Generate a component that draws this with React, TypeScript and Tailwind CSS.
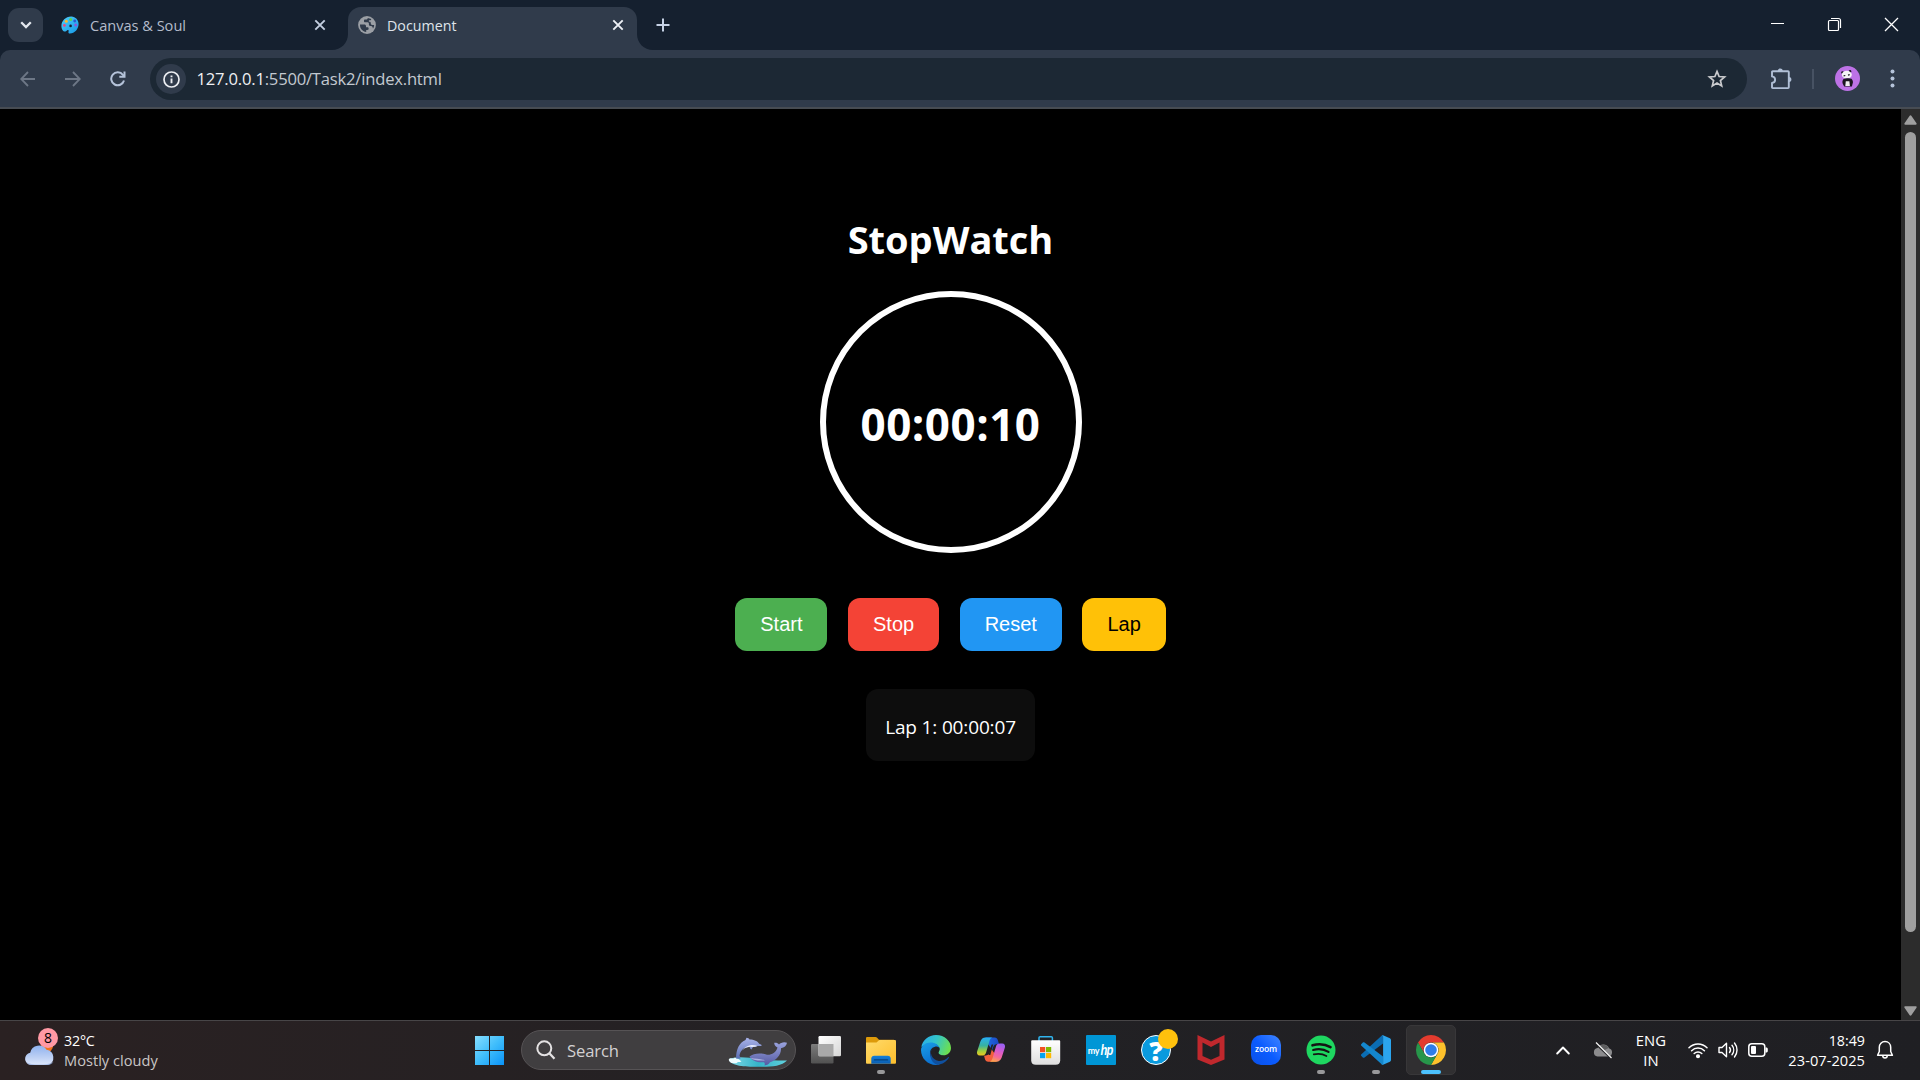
import React from 'react'
import type { ReactNode } from 'react'

/* ---------- browser chrome icons ---------- */

const PaletteIcon = () => (
  <svg width="18" height="18" viewBox="0 0 18 18">
    <defs>
      <linearGradient id="pal" x1="0" y1="0" x2="1" y2="1">
        <stop offset="0" stopColor="#4fd0fb" />
        <stop offset="1" stopColor="#1597e6" />
      </linearGradient>
    </defs>
    <path
      d="M10.400 .4C14.600 .6 17.600 3.800 17.600 7.900c0 5-4 9.500-8.700 9.600-1.300 0-1.700-.9-1.400-1.800.4-1.100.1-1.700-.7-1.700-.9 0-1.300 1.200-2.500 1.500C2.400 15.900.4 13.200.4 9.900.4 4.600 4.900.2 10.400.4z"
      fill="url(#pal)"
    />
    <circle cx="9.600" cy="9.900" r="1.300" fill="#14202f" />
    <circle cx="3.400" cy="9.400" r="1.400" fill="#f0477d" />
    <circle cx="5.300" cy="5.300" r="1.500" fill="#ffb62e" />
    <circle cx="9.600" cy="3.500" r="1.500" fill="#62cf4a" />
    <circle cx="13.700" cy="5" r="1.400" fill="#2c56d0" />
    <circle cx="14.700" cy="8.900" r="1.500" fill="#8b57dd" />
  </svg>
)

const GlobeIcon = () => (
  <svg width="18" height="18" viewBox="0 0 18 18">
    <circle cx="9" cy="9" r="8.900" fill="#9b9fa5" />
    <path
      d="M2 8.600h4.200c1.200 0 1.800.6 1.800 1.600v1h1.400c.8 0 1.200.4 1.200 1.100v.4c0 .8-.5 1.200-1.300 1.200H8.200v2C4.800 15.500 2 12.900 2 9z"
      fill="#303b4b"
    />
    <path
      d="M9.800 2.100C9.600 3.200 9 3.600 8 3.600H7c-.6 0-1 .4-1 1v.7c0 .6.400 1 1 1h2.400c1 0 1.500.6 1.500 1.400v.9c0 .8.5 1.300 1.300 1.300h.7c.8 0 1.300.4 1.600 1.200l.5 1.300c.8-1 1.200-2.200 1.100-3.500h-1.900c-.9 0-1.400-.5-1.400-1.300V7c0-.8-.5-1.300-1.300-1.300h-.6V4.200h1c.9 0 1.300-.5 1.300-1.300z"
      fill="#303b4b"
    />
  </svg>
)

const CloseX = ({ color }: { color: string }) => (
  <svg width="12" height="12" viewBox="0 0 12 12" fill="none" stroke={color} strokeWidth="1.900">
    <path d="M1.300 1.300l9.400 9.400M10.700 1.300L1.300 10.700" />
  </svg>
)

const TabFlareLeft = () => (
  <svg className="absolute -left-4 bottom-0" width="16" height="16" viewBox="0 0 16 16">
    <path d="M16 0v16H0C9 16 16 9 16 0z" fill="#303b4b" />
  </svg>
)
const TabFlareRight = () => (
  <svg className="absolute -right-4 bottom-0" width="16" height="16" viewBox="0 0 16 16">
    <path d="M0 0v16h16C7 16 0 9 0 0z" fill="#303b4b" />
  </svg>
)

const ExtensionsIcon = () => (
  <svg width="24" height="24" viewBox="0 0 24 24" fill="none" stroke="#b0bfd6" strokeWidth="1.900" strokeLinejoin="round">
    <path d="M3.800 4.200H19c.5 0 .8.300.8.800V20.300c0 .5-.3.800-.8.800H3.800c-.5 0-.8-.3-.8-.8v-4.400c1.900-.2 3.100-1.400 3.100-3.200S4.900 9.600 3 9.400V5c0-.5.3-.8.800-.8z" />
    <path d="M8.800 4c.2-1.700 1.200-2.400 2.500-2.400S13.600 2.300 13.800 4zM20 10c1.700.2 2.400 1.200 2.400 2.500s-.7 2.300-2.400 2.500z" fill="#b0bfd6" stroke="none" />
  </svg>
)

const PandaAvatar = () => (
  <svg width="25" height="25" viewBox="0 0 25 25">
    <circle cx="12.500" cy="12.500" r="12.500" fill="#bd72e6" />
    <circle cx="7.500" cy="6.500" r="1.300" fill="#1b1520" />
    <circle cx="15" cy="5.400" r="1.300" fill="#1b1520" />
    <ellipse cx="11.800" cy="8.700" rx="5" ry="3.900" fill="#f5f3f5" />
    <path d="M8.600 9.800l1.700-.3M13 9.100l1.700-.4" stroke="#1b1520" strokeWidth="1.200" />
    <path d="M8.500 13c2-.9 6-1.200 8-.3 1.500 1.600 1.900 3.700 1 5.300l-.6 2.400H9.200L8 18.300c-1-1.800-.7-3.800.5-5.300z" fill="#1b1520" />
    <path d="M10.800 15.200h3.600l.5 4.700h-4.600z" fill="#efecee" />
  </svg>
)

/* ---------- taskbar icons ---------- */

const WeatherIcon = () => (
  <svg width="32" height="26" viewBox="0 0 32 26">
    <defs>
      <linearGradient id="cl" x1="0" y1="0" x2="0" y2="1">
        <stop offset="0" stopColor="#8fb2ee" />
        <stop offset="0.600" stopColor="#bdd0f4" />
        <stop offset="1" stopColor="#dde7fb" />
      </linearGradient>
    </defs>
    <circle cx="23" cy="6" r="6" fill="#f0731c" />
    <path d="M7 25a6.200 6.200 0 0 1-.8-12.300A9 9 0 0 1 22.500 9.700 7.900 7.900 0 0 1 24 25z" fill="url(#cl)" />
    <path d="M2.500 22c3 3.600 24 3.500 27.200-.5-1.200 2.300-3.300 3.500-5.700 3.500H7c-1.800 0-3.500-1.200-4.500-3z" fill="#8fa9de" opacity=".7" />
  </svg>
)

const WindowsIcon = () => (
  <svg width="30" height="30" viewBox="0 0 30 30">
    <defs>
      <linearGradient id="win" x1="0" y1="0" x2="1" y2="1">
        <stop offset="0" stopColor="#86deff" />
        <stop offset="0.500" stopColor="#3fbdfb" />
        <stop offset="1" stopColor="#0a93f8" />
      </linearGradient>
    </defs>
    <path d="M0 1h14v14H0zM15 1h14v14H15zM0 16h14v14H0zM15 16h14v14H15z" fill="url(#win)" />
  </svg>
)

const DolphinArt = () => (
  <svg width="60" height="30" viewBox="0 0 60 30">
    <defs>
      <linearGradient id="sea" x1="0" y1="0" x2="1" y2="0">
        <stop offset="0" stopColor="#7fd9e6" />
        <stop offset="0.500" stopColor="#35b4c9" />
        <stop offset="1" stopColor="#5fd0dc" />
      </linearGradient>
      <linearGradient id="dol" x1="0" y1="0" x2="0" y2="1">
        <stop offset="0" stopColor="#a9b3ea" />
        <stop offset="1" stopColor="#5b6fb4" />
      </linearGradient>
      <linearGradient id="wha" x1="0" y1="0" x2="0" y2="1">
        <stop offset="0" stopColor="#9aa3dd" />
        <stop offset="1" stopColor="#555aa3" />
      </linearGradient>
    </defs>
    <path d="M1 22c5-2.500 14-2 21-1.300 10 1.600 26 3.300 37 2.800-6 6.500-18 6.500-32 6.300C14 29.700 2 28.500 1 22z" fill="url(#sea)" />
    <path d="M1 22c2-1.800 3.500.2 5-.8s2.500.5 4 .7 2 1.600 3.500 2.600c-2 1.200-3 0-4.500 1.200S6 25.500 4.500 26 0 23.500 1 22z" fill="#effcff" />
    <path
      d="M8 21.500c.3-9.500 3-15.500 9.500-18.500L18.500.8c1.500.2 2.500.9 3 1.600 4.500 0 8.300 1.800 9.700 4.400 1.300.5 2.600 1 2.600 1.700-1 .8-2.800.6-4.300.4-2 .8-3 1-4.500 1l-1.500 2.600c-1-.4-1.700-1.300-1.800-2.500C15.500 9.800 12 14 11.500 19c1 .8 1 1.800.8 2.700z"
      fill="url(#dol)"
    />
    <path d="M29.500 9c-4.500-2-11.500-1-15 4.500 3-3.200 6-3.800 9-3.600 2.500.1 4.500-.2 6-.9z" fill="#e4e8fb" />
    <path
      d="M21.500 19.500c4-3.500 12-3.800 17.500-1.800 4.500.3 9-1.700 10.500-7.200-2-.7-3.500-2.700-3.200-4.700 2-.3 3.700.3 4.700 1.600 1.500-1.700 5-3 8-1.700-.5 3-2.700 5-6 5.500.3 7-5 12.300-11 14-1 1.700-3 3-5.500 3.200.5-1.500.3-2.500-.5-3.200-7 .5-12.500-1.500-14.500-5.700z"
      fill="url(#wha)"
    />
    <path d="M22.500 21c5 1 10 .7 14.500 2.200-4 .8-11 .5-14.500-2.200z" fill="#c9d0f5" opacity=".7" />
  </svg>
)

const TaskViewIcon = () => (
  <svg width="30" height="30" viewBox="0 0 30 30">
    <defs>
      <linearGradient id="tv" x1="0" y1="0" x2="1" y2="1">
        <stop offset="0" stopColor="#ffffff" />
        <stop offset="1" stopColor="#d6d6d6" />
      </linearGradient>
      <linearGradient id="tv2" x1="0" y1="0" x2="0" y2="1">
        <stop offset="0" stopColor="#7c7c7c" />
        <stop offset="1" stopColor="#515151" />
      </linearGradient>
    </defs>
    <rect x="0" y="9" width="22.500" height="19.500" rx="1.200" fill="url(#tv2)" />
    <rect x="7.500" y="1" width="22.500" height="20.300" rx="1.200" fill="url(#tv)" />
    <path d="M7.500 9h15v12.300h-14a1 1 0 0 1-1-1z" fill="#a9a9a9" />
  </svg>
)

const ExplorerIcon = () => (
  <svg width="30" height="30" viewBox="0 0 30 30">
    <defs>
      <linearGradient id="fo" x1="0" y1="0" x2="1" y2="1">
        <stop offset="0" stopColor="#ffdb6b" />
        <stop offset="1" stopColor="#fdbe2c" />
      </linearGradient>
      <linearGradient id="fb" x1="0" y1="0" x2="0" y2="1">
        <stop offset="0" stopColor="#1280da" />
        <stop offset="1" stopColor="#0a5cb0" />
      </linearGradient>
    </defs>
    <path d="M0 3.300C0 2.500.6 2 1.300 2h8.200c.6 0 1 .2 1.400.6L13 4.700H28V14H0z" fill="#dd9a0a" />
    <path d="M0 7.600h9.700c.6 0 1-.2 1.400-.6l1.300-1.300c.4-.4.8-.6 1.400-.6H28.700c.8 0 1.300.5 1.300 1.300v21c0 .8-.5 1.300-1.300 1.300H1.300C.5 28.700 0 28.200 0 27.400z" fill="url(#fo)" />
    <path d="M5.300 28.700V23.600c0-1.700 1.200-2.900 2.900-2.900h13.600c1.700 0 2.900 1.200 2.900 2.900v5.100z" fill="url(#fb)" />
    <path d="M8.500 24.900h13" stroke="#05427f" strokeWidth="1.300" strokeLinecap="round" />
  </svg>
)

const EdgeIcon = () => (
  <svg width="30" height="30" viewBox="0 0 30 30">
    <defs>
      <linearGradient id="e1" x1="0" y1=".3" x2="1" y2=".6">
        <stop offset="0" stopColor="#2aaee8" />
        <stop offset="0.450" stopColor="#33c5c9" />
        <stop offset="1" stopColor="#6fe04a" />
      </linearGradient>
      <linearGradient id="e2" x1="0" y1="0" x2=".4" y2="1">
        <stop offset="0" stopColor="#1a9fe6" />
        <stop offset="1" stopColor="#0b6fd0" />
      </linearGradient>
    </defs>
    <path d="M.3 12C1.500 5 7.600 0 15 0c8.800 0 15 6.200 15 13 0 4.500-3.500 7.300-7.500 7.300-3 0-5.200-1-5.200-2.400 0-1 1.200-1.600 1.200-3.600 0-2.700-2.700-5.800-7.700-5.800C6 8.500 2 11 .3 12z" fill="url(#e1)" />
    <path d="M0 15C0 10.800 4.300 7.400 9.600 7.400c4.600 0 8.300 2.300 9.100 5.900-1.300-1.500-3-2-4.700-1.600-3.800.9-5.700 4.300-4.700 8.300 1 4.200 4.700 7.700 10.200 8.800C17.800 29.700 16.500 30 15 30 6.700 30 0 23.300 0 15z" fill="url(#e2)" />
    <path d="M12 12.600c-4.500 4.600-1.200 12.600 5.700 13.300 4.400.4 7.700-1.600 9.600-3.800.5-.5 1 0 .7.500C25.700 26.600 21.500 29.600 16.500 29.900 9 27.800 7 17.800 12 12.600z" fill="#10509e" />
    <path d="M14.300 15.300c.5-1.800 2-3 4.200-2.600.3 2.600-.9 3.600-1.200 4.700-.2 1.500 1.900 2.700 5.200 2.900-4.800 1.200-9.200-1.200-8.200-5z" fill="#1f2022" />
  </svg>
)

const CopilotIcon = () => (
  <svg width="30" height="30" viewBox="0 0 30 30">
    <defs>
      <linearGradient id="c1" x1="0" y1="0" x2="0" y2="1">
        <stop offset="0" stopColor="#27b0f5" />
        <stop offset="0.450" stopColor="#38b2a0" />
        <stop offset="0.750" stopColor="#a2cf3c" />
        <stop offset="1" stopColor="#f0c620" />
      </linearGradient>
      <linearGradient id="c2" x1=".6" y1="0" x2=".3" y2="1">
        <stop offset="0" stopColor="#9b60f2" />
        <stop offset="0.400" stopColor="#d95bcb" />
        <stop offset="0.700" stopColor="#f5679a" />
        <stop offset="1" stopColor="#fba54b" />
      </linearGradient>
      <linearGradient id="c3" x1="0" y1="0" x2="1" y2="0">
        <stop offset="0" stopColor="#1f6fe8" />
        <stop offset="1" stopColor="#1b49c4" />
      </linearGradient>
    </defs>
    <path d="M9.500 2.500h9.300c1.600 0 2.500 1 3 2.500l1.200 4c-3.500-.3-5 .8-5.800 3l-1 3-5-7z" fill="url(#c3)" />
    <path d="M20.500 26.700h-8.300c-1.800 0-2.700-.8-3.200-2.400L8 20.600c3.500.2 5-.8 5.700-3l1.300-4 5 7z" fill="#f2603c" />
    <path d="M9.500 2.500h6.800c-1.600.4-2.300 1.800-2.900 3.700l-3.300 11.200c-.6 2-1.700 3.200-4.100 3.200H3.800c-2.300 0-3.300-1.700-2.700-4L4.300 6.700C5.200 4 7 2.500 9.500 2.500z" fill="url(#c1)" />
    <path d="M20.500 26.700h-6.800c1.600-.4 2.300-1.800 2.900-3.700l3.300-11.200c.6-2 1.700-3.200 4.100-3.200h2.200c2.300 0 3.300 1.700 2.700 4l-3.200 9.900c-.9 2.700-2.700 4.200-5.200 4.200z" fill="url(#c2)" />
    <path d="M15.600 9.500l1.600.1-2.900 10.500-1.800-.2z" fill="#232225" />
  </svg>
)

const StoreIcon = () => (
  <svg width="30" height="30" viewBox="0 0 30 30">
    <defs>
      <linearGradient id="st" x1="0" y1="0" x2="0" y2="1">
        <stop offset="0" stopColor="#ffffff" />
        <stop offset="1" stopColor="#dedede" />
      </linearGradient>
    </defs>
    <path d="M8 6V2.800c0-.7.400-1.100 1.100-1.100h11.200c.7 0 1.100.4 1.100 1.100V6" fill="none" stroke="#30b4ee" strokeWidth="1.500" />
    <path d="M.2 6.600c0-.9.400-1.300 1.300-1.300h26.400c.9 0 1.300.4 1.300 1.300v18.600c0 3-1.600 4.600-4.600 4.600H4.800C1.800 29.800.2 28.200.2 25.200z" fill="url(#st)" />
    <path d="M9 12h5.200v5.200H9z" fill="#f25022" />
    <path d="M15 12h5.200v5.200H15z" fill="#7fba00" />
    <path d="M9 18h5.200v5.200H9z" fill="#05a3ee" />
    <path d="M15 18h5.200v5.200H15z" fill="#ffb902" />
  </svg>
)

const MyHpIcon = () => (
  <div className="flex h-[30px] w-[30px] items-center justify-center rounded-[1px] bg-[#0096d6] leading-none text-white">
    <span className="pt-px font-['Lato'] text-[9px] font-bold tracking-[-0.300px]">my</span>
    <span className="origin-center scale-x-80 font-['Liberation_Sans',sans-serif] text-[14px] font-bold italic tracking-[-1px]">hp</span>
  </div>
)

const HelpIcon = () => (
  <div className="relative flex h-[30px] w-[30px] items-center justify-center rounded-full border-[1.500px] border-white bg-[#0a9ade]">
    <span className="font-['Open_Sans',sans-serif] text-[27px] font-extrabold leading-none text-white">?</span>
    <span className="absolute -right-[7.500px] -top-[7.500px] h-5 w-5 rounded-full bg-[#ffc10d]" />
  </div>
)

const McAfeeIcon = () => (
  <svg width="30" height="30" viewBox="0 0 30 30">
    <path d="M1.500 0L15 6.500 28.500 0V24.500L15 30 1.500 24.500zM6.500 7.500V21L15 24.700 23.500 21V7.500L15 12z" fill="#c0282d" fillRule="evenodd" />
  </svg>
)

const ZoomIcon = () => (
  <div className="flex h-[30px] w-[30px] items-center justify-center rounded-[10px] bg-gradient-to-bl from-[#3f85ff] via-[#0b5cff] to-[#0a50e8] pb-[2px]">
    <span className="font-['Open_Sans',sans-serif] text-[8.500px] font-semibold leading-none tracking-[-0.200px] text-white">zoom</span>
  </div>
)

const SpotifyIcon = () => (
  <svg width="30" height="30" viewBox="0 0 30 30">
    <circle cx="15" cy="15" r="14.500" fill="#1ed760" />
    <g fill="none" stroke="#141414" strokeLinecap="round">
      <path d="M6.500 10.300c5.500-1.500 13-1 18 1.900" strokeWidth="2.600" />
      <path d="M7.200 15c5-1.300 11-.7 15.300 1.900" strokeWidth="2.200" />
      <path d="M7.800 19.400c4.500-1 9-.5 12.600 1.600" strokeWidth="1.800" />
    </g>
  </svg>
)

const VsCodeIcon = () => (
  <svg width="30" height="30" viewBox="0 0 30 30">
    <path d="M22 .3v8.200L3.500 22.500c-.6.400-1.200.4-1.700-.1L.4 21.100c-.6-.5-.6-1.400 0-1.900L20.300.9c.5-.5 1.100-.7 1.700-.6z" fill="#0b6db3" />
    <path d="M22 29.700v-8.200L3.500 7.500c-.6-.4-1.200-.4-1.700.1L.4 8.900c-.6.500-.6 1.400 0 1.900L20.300 29.100c.5.500 1.100.7 1.700.6z" fill="#1487cd" />
    <path d="M22 .3l6.900 3c.7.300 1.100.9 1.100 1.700v20c0 .8-.4 1.400-1.100 1.700l-6.900 3c-.8.300-1.400.1-1.900-.5.9.7 2 .2 2-.9V1.700c0-1.100-1.100-1.600-2-.9.500-.6 1.100-.8 1.900-.5z" fill="#2ba5ee" />
  </svg>
)

const ChromeIcon = () => (
  <svg width="30" height="30" viewBox="0 0 30 30">
    <path d="M2.010 7.500A15 15 0 0 1 27.990 7.500H15A7.500 7.500 0 0 0 8.500 18.750z" fill="#e33b2e" />
    <path d="M27.990 7.500A15 15 0 0 1 15 30l6.500-11.250A7.500 7.500 0 0 0 15 7.500z" fill="#fdc12b" />
    <path d="M15 30A15 15 0 0 1 2.010 7.500L8.500 18.750A7.500 7.500 0 0 0 21.500 18.750z" fill="#27964a" />
    <circle cx="15" cy="15" r="7.300" fill="#fff" />
    <circle cx="15" cy="15" r="5.800" fill="#2f7de9" />
  </svg>
)

const TaskbarApp = ({ children, running, active }: { children: ReactNode; running?: boolean; active?: boolean }) => (
  <div
    className={
      active
        ? 'relative flex h-[50px] w-[50px] items-center justify-center rounded-[5px] border border-[#383739] bg-[#302f31]'
        : 'relative flex h-[50px] w-[50px] items-center justify-center'
    }
  >
    {children}
    {running && <span className="absolute bottom-px left-[21px] h-1 w-2 rounded-full bg-[#98989a]" />}
    {active && <span className="absolute bottom-0 left-[14px] h-1 w-5 rounded-full bg-[#4cc2ff]" />}
  </div>
)

/* ---------- page sections ---------- */

function TabStrip() {
  return (
    <div className="flex h-[50px] items-start bg-[#15202f]">
      <button className="ml-2 mt-2 flex h-[34px] w-[35px] items-center justify-center rounded-[11px] bg-[#303b4b]">
        <svg width="12" height="8" viewBox="0 0 12 8" fill="none" stroke="#e3e7ee" strokeWidth="2.300">
          <path d="M1.200 1.300L6 6.100l4.800-4.800" />
        </svg>
      </button>
      <div className="flex h-[50px] w-[305px] items-center pl-[18px]">
        <PaletteIcon />
        <span className="ml-[11px] w-[224px] pt-[2px] text-[14.600px] tracking-[-0.020px] text-[#b4bccb]">Canvas &amp; Soul</span>
        <CloseX color="#c3cee0" />
      </div>
      <div className="relative mt-[7px] flex h-[43px] w-[289px] items-center rounded-t-[13px] bg-[#303b4b] pb-[7px] pl-[10px]">
        <TabFlareLeft />
        <GlobeIcon />
        <span className="ml-[11px] w-[225px] pt-[2px] text-[14.250px] text-[#dfe3ea]">Document</span>
        <CloseX color="#eef1f6" />
        <TabFlareRight />
      </div>
      <svg className="ml-[19px] mt-[18px]" width="14" height="14" viewBox="0 0 14 14" stroke="#c6d2e6" strokeWidth="2">
        <path d="M7 .5v13M.5 7h13" />
      </svg>
      <div className="ml-auto mr-[21px] mt-[17px] flex items-center gap-[42px]">
        <svg width="15" height="15" viewBox="0 0 15 15" stroke="#fff" strokeWidth="1">
          <path d="M1 6.500h13" />
        </svg>
        <svg width="15" height="15" viewBox="0 0 15 15" fill="none" stroke="#fff" strokeWidth="1.200">
          <rect x="1.500" y="3.500" width="10" height="10" rx="1" />
          <path d="M4 1.500h7.500c1.200 0 2 .8 2 2V11" />
        </svg>
        <svg width="15" height="15" viewBox="0 0 15 15" stroke="#fff" strokeWidth="1.300">
          <path d="M1 1l13 13M14 1L1 14" />
        </svg>
      </div>
    </div>
  )
}

function Toolbar() {
  return (
    <div className="bg-[#15202f]">
      <div className="flex h-[59px] items-center rounded-t-[10px] border-b-2 border-[#474c53] bg-[#303b4b] pl-5">
        <svg width="16" height="16" viewBox="0 0 16 16" fill="none" stroke="#6d7786" strokeWidth="1.800">
          <path d="M15 8H1.500M8 1L1.200 8 8 15" />
        </svg>
        <svg className="ml-[29px]" width="16" height="16" viewBox="0 0 16 16" fill="none" stroke="#6d7786" strokeWidth="1.800">
          <path d="M0 8h14M8 1l6.800 7L8 15" />
        </svg>
        <svg className="ml-[29px]" width="16" height="16" viewBox="0 0 16 16" fill="none" stroke="#b5c3da" strokeWidth="2">
          <path d="M14 9.500A6.500 6.500 0 1 1 12.900 3.800L14 5.200" />
          <path d="M14.500.5v5.200H9.300" />
        </svg>
        <div className="ml-6 mt-px flex h-[42px] w-[1597px] items-center rounded-full bg-[#1c2834] pl-[6px]">
          <div className="flex h-[30px] w-[30px] items-center justify-center rounded-full bg-[#303b4b]">
            <svg width="17" height="17" viewBox="0 0 17 17" fill="none" stroke="#eceef2" strokeWidth="1.700">
              <circle cx="8.500" cy="8.500" r="7.500" />
              <path d="M8.500 7.600v4.600M8.500 4.500v1.800" strokeWidth="1.900" />
            </svg>
          </div>
          <span className="ml-[10.500px] pt-px text-[16.630px] tracking-[-0.210px] text-[#c3c9d0]">
            <span className="text-[#eef0f3]">127.0.0.1</span>:5500/Task2/index.html
          </span>
          <svg className="ml-auto mr-5" width="20" height="20" viewBox="0 0 20 20" fill="none" stroke="#c9cacd" strokeWidth="1.700">
            <path d="M10 2.400l2.100 5.100 5.500.4-4.200 3.600 1.300 5.400L10 14l-4.700 2.900 1.300-5.400L2.400 7.900l5.500-.4z" />
          </svg>
        </div>
        <div className="ml-[22px]">
          <ExtensionsIcon />
        </div>
        <div className="ml-[19px] h-5 w-[2px] bg-[#475263]" />
        <div className="ml-[21px]">
          <PandaAvatar />
        </div>
        <svg className="ml-[30px]" width="5" height="19" viewBox="0 0 5 19" fill="#b5c3da">
          <circle cx="2.500" cy="2.500" r="2" />
          <circle cx="2.500" cy="9.500" r="2" />
          <circle cx="2.500" cy="16.500" r="2" />
        </svg>
      </div>
    </div>
  )
}

const BTN = "h-[53px] rounded-[12px] px-[25px] pb-[2px] font-['Liberation_Sans',Arial,sans-serif] text-[20px]"

function Stopwatch() {
  return (
    <main className="flex flex-1 flex-col items-center bg-black pt-[103px] text-white">
      <h1 className="h-[54px] text-[38px] font-bold leading-[54px]">StopWatch</h1>
      <div className="mt-[25px] flex h-[262px] w-[262px] items-center justify-center rounded-full border-[6px] border-white pt-1 text-[44px] font-bold tracking-[0.480px]">
        00:00:10
      </div>
      <div className="mt-[45px] flex gap-[20.500px]">
        <button className={`${BTN} bg-[#4caf50]`}>Start</button>
        <button className={`${BTN} bg-[#f44336]`}>Stop</button>
        <button className={`${BTN} bg-[#2196f3]`}>Reset</button>
        <button className={`${BTN} bg-[#ffc107] text-black`}>Lap</button>
      </div>
      <div className="mt-[38px] flex h-[72px] w-[169px] items-center justify-center rounded-[12px] bg-[#0d0d0d] pt-[5px] text-[19px] tracking-[-0.150px]">
        Lap 1: 00:00:07
      </div>
    </main>
  )
}

function Scrollbar() {
  return (
    <div className="flex w-[19px] flex-col items-center bg-[#2c2c2c]">
      <svg className="mt-[6px]" width="13" height="10" viewBox="0 0 13 10" fill="#9f9f9f">
        <path d="M6.500.3c.4 0 .7.200 1 .6l5 7.400c.4.700.1 1.400-.8 1.400H1.300C.4 9.700.1 9 .5 8.300l5-7.400c.3-.4.6-.6 1-.6z" />
      </svg>
      <div className="mt-[7px] h-[800px] w-[11px] rounded-full bg-[#9f9f9f]" />
      <svg className="mb-[4px] mt-auto" width="13" height="10" viewBox="0 0 13 10" fill="#9f9f9f">
        <path d="M6.500 9.700c.4 0 .7-.2 1-.6l5-7.400C12.900 1 12.600.3 11.700.3H1.300C.4.3.1 1 .5 1.700l5 7.400c.3.4.6.6 1 .6z" />
      </svg>
    </div>
  )
}

function Taskbar() {
  return (
    <div className="flex h-[60px] items-center border-t border-[#474547] bg-linear-to-r from-[#2a2122] via-[#222124] to-[#1f1f23] pb-px">
      <div className="flex w-[475px] items-center pl-6">
        <div className="relative h-[34px] w-[33px] pt-[7px]">
          <WeatherIcon />
          <span className="absolute -top-[5px] left-[14px] flex h-5 w-5 items-center justify-center rounded-full bg-[#ff99a4] text-[14px] leading-none text-black">
            8
          </span>
        </div>
        <div className="ml-[7px] text-[14.250px] leading-5 text-white">
          <div className="tracking-[-0.200px]">32°C</div>
          <div className="-mt-px text-[14.600px] tracking-[0.020px] text-[#c9c6c6]">Mostly cloudy</div>
        </div>
      </div>

      <WindowsIcon />
      <div className="ml-4 flex h-10 w-[275px] items-center rounded-full border border-[#565355] bg-[#403e40] pl-[14px]">
        <svg width="20" height="20" viewBox="0 0 20 20" fill="none" stroke="#e4e2e3" strokeWidth="2">
          <circle cx="8.300" cy="8.300" r="7" />
          <path d="M13.300 13.300l5.200 5.400" strokeWidth="2.300" />
        </svg>
        <span className="ml-[11px] pt-[2px] text-[16.630px] tracking-[-0.140px] text-[#d3d1d2]">Search</span>
        <div className="ml-auto mr-[7px] mt-[3px]">
          <DolphinArt />
        </div>
      </div>

      <div className="ml-[5px] flex gap-[5px]">
        <TaskbarApp><TaskViewIcon /></TaskbarApp>
        <TaskbarApp running><ExplorerIcon /></TaskbarApp>
        <TaskbarApp><EdgeIcon /></TaskbarApp>
        <TaskbarApp><CopilotIcon /></TaskbarApp>
        <TaskbarApp><StoreIcon /></TaskbarApp>
        <TaskbarApp><MyHpIcon /></TaskbarApp>
        <TaskbarApp><HelpIcon /></TaskbarApp>
        <TaskbarApp><McAfeeIcon /></TaskbarApp>
        <TaskbarApp><ZoomIcon /></TaskbarApp>
        <TaskbarApp running><SpotifyIcon /></TaskbarApp>
        <TaskbarApp running><VsCodeIcon /></TaskbarApp>
        <TaskbarApp active><ChromeIcon /></TaskbarApp>
      </div>

      <div className="ml-auto mr-[26px] flex items-center text-white">
        <svg width="14" height="9" viewBox="0 0 14 9" fill="none" stroke="#fff" strokeWidth="1.900" strokeLinecap="round" strokeLinejoin="round">
          <path d="M1.200 7.500L7 1.500l5.800 6" />
        </svg>
        <svg className="ml-[23px]" width="20" height="17" viewBox="0 0 20 17">
          <path d="M4.500 14.500A4.300 4.300 0 0 1 4.600 6 6.300 6.300 0 0 1 16 6.200a4.300 4.300 0 0 1-.3 8.300z" fill="#8b8b8d" />
          <path d="M5 5.600A6.300 6.300 0 0 1 15.800 6C13 6.800 12 8 10.500 9.500z" fill="#5e5e60" />
          <path d="M2.500 1.500l15.500 15" stroke="#1f1f23" strokeWidth="1.600" />
          <path d="M3 .5l15.500 15.500" stroke="#f4f4f4" strokeWidth="1.300" />
        </svg>
        <div className="ml-[19px] w-[38px] text-center text-[14.800px] leading-5 tracking-[0.100px]">
          <div>ENG</div>
          <div>IN</div>
        </div>
        <svg className="ml-[18px]" width="20" height="17" viewBox="0 0 20 17" fill="none" stroke="#fff" strokeWidth="1.500" strokeLinecap="round">
          <path d="M1 5.800a12.600 12.600 0 0 1 18 0M3.600 8.700a9 9 0 0 1 12.800 0M6.200 11.500a5.400 5.400 0 0 1 7.600 0" />
          <circle cx="10" cy="14.300" r="1.300" fill="#fff" />
        </svg>
        <svg className="ml-[10px]" width="20" height="18" viewBox="0 0 20 18" fill="none" stroke="#fff" strokeWidth="1.400" strokeLinecap="round" strokeLinejoin="round">
          <path d="M1 6.500h3l4.500-4.300v13.600L4 11.500H1z" />
          <path d="M11.500 6.500a4 4 0 0 1 0 5M14 4.300a7.400 7.400 0 0 1 0 9.400M16.500 2a11 11 0 0 1 0 14" />
        </svg>
        <svg className="ml-[10px]" width="20" height="14" viewBox="0 0 20 14">
          <rect x=".8" y=".8" width="16" height="12.400" rx="3" fill="none" stroke="#fff" strokeWidth="1.500" />
          <rect x="3" y="3" width="5" height="8" rx="1" fill="#fff" />
          <path d="M17.500 4.500h.8c.9 0 1.500.6 1.500 1.500v2c0 .9-.6 1.500-1.500 1.500h-.8z" fill="#fff" />
        </svg>
        <div className="ml-[17px] w-[80px] text-right leading-5">
          <div className="text-[14.250px]">18:49</div>
          <div className="-mt-px text-[14.600px] tracking-[0.050px]">23-07-2025</div>
        </div>
        <svg className="ml-[11px]" width="18" height="20" viewBox="0 0 18 20" fill="none" stroke="#fff" strokeWidth="1.500" strokeLinejoin="round">
          <path d="M9 1.500c3.300 0 5.700 2.500 5.700 5.800v4.200l1.700 3.700H1.600l1.700-3.700V7.300C3.300 4 5.700 1.500 9 1.500z" />
          <path d="M6.700 15.500c.2 3.300 4.400 3.300 4.600 0" />
        </svg>
      </div>
    </div>
  )
}

export default function App() {
  return (
    <div className="flex h-[1080px] w-[1920px] flex-col overflow-hidden whitespace-nowrap bg-black font-['Open_Sans','Noto_Sans',sans-serif]">
      <TabStrip />
      <Toolbar />
      <div className="flex flex-1">
        <Stopwatch />
        <Scrollbar />
      </div>
      <Taskbar />
    </div>
  )
}
